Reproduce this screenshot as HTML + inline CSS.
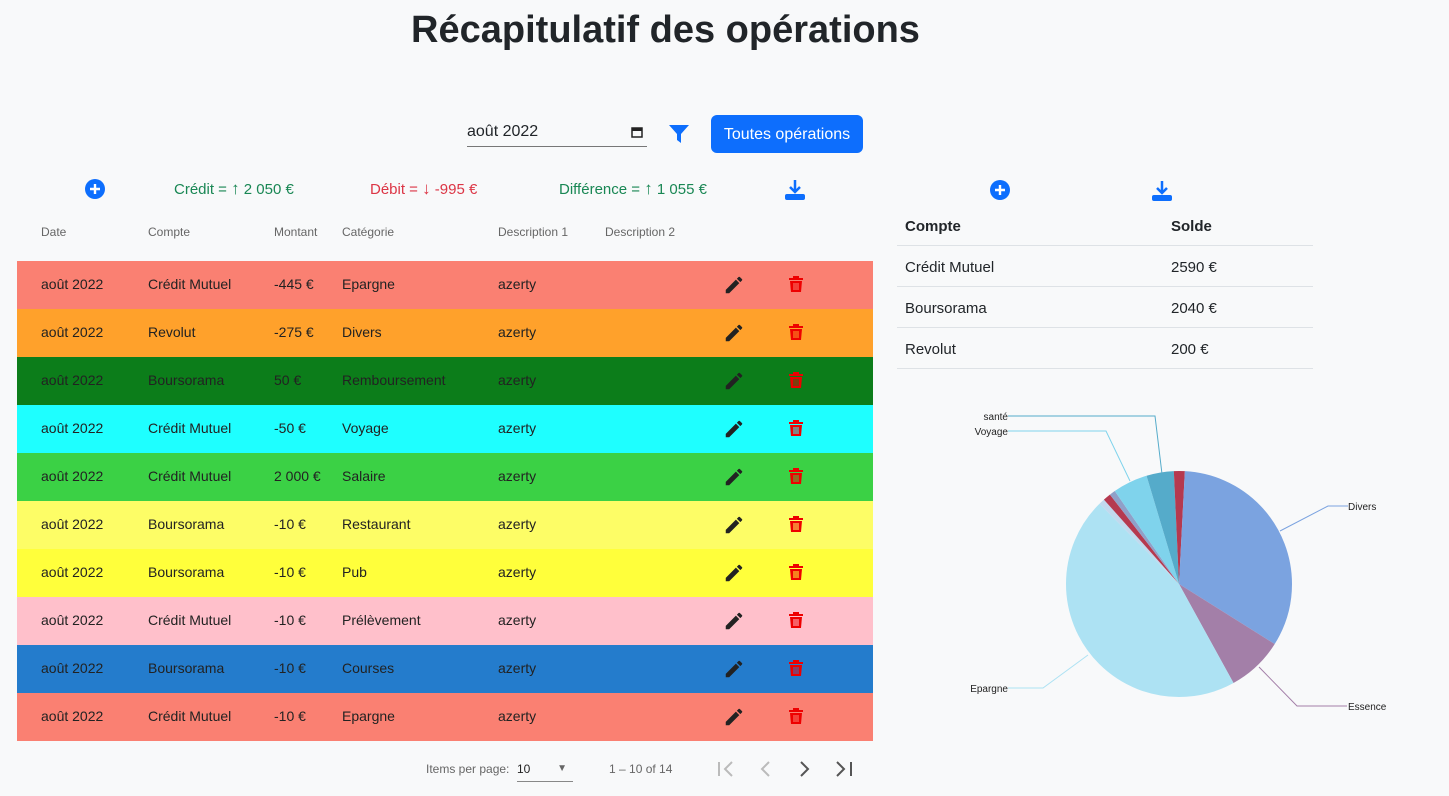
<!DOCTYPE html>
<html><head><meta charset="utf-8">
<style>
body{margin:0;width:1449px;height:796px;background:#f8f9fa;font-family:"Liberation Sans",sans-serif;position:relative;overflow:hidden;color:#212529}
.a{position:absolute;white-space:nowrap}
h1{position:absolute;left:0;width:1331px;top:9px;margin:0;text-align:center;font-size:38px;font-weight:bold;color:#212529}
.row{position:absolute;left:17px;width:856px;height:48px;font-size:14px;color:#222}
.row span{position:absolute;top:15px}
.th{font-size:12px;color:#666;top:225px}
.rt{position:absolute;left:897px;width:416px;border-bottom:1px solid #dee2e6;height:40px;font-size:15px}
.rt span{position:absolute;top:13px}
</style></head><body>
<h1>Récapitulatif des opérations</h1>

<div class="a" style="left:467px;top:123px;width:180px;height:23px;border-bottom:1px solid #777;font-size:16px">août 2022
<svg style="position:absolute;right:4px;top:3px" width="12" height="12" viewBox="0 0 12 12"><rect x="1" y="2" width="10" height="9" fill="none" stroke="#222" stroke-width="1.5"/><rect x="1" y="2" width="10" height="3" fill="#222"/></svg></div>
<svg class="a" style="left:668px;top:124px" width="22" height="20" viewBox="0 0 22 20"><path d="M1 1H21L13 10V19L9 16V10Z" fill="#0d6efd"/></svg>
<div class="a" style="left:711px;top:115px;width:152px;height:38px;background:#0d6efd;border-radius:6px;color:#fff;font-size:16px;line-height:40px;text-align:center">Toutes opérations</div>

<svg class="a" style="left:85px;top:179px" width="20" height="20"><circle cx="10" cy="10" r="10" fill="#0d6efd"/><path d="M10 5V15M5 10H15" stroke="#fff" stroke-width="2.4"/></svg>
<div class="a" style="left:174px;top:179px;font-size:15px;color:#198754">Crédit = <b style="font-size:17px">↑</b> 2 050 €</div>
<div class="a" style="left:370px;top:179px;font-size:15px;color:#dc3545">Débit = <b style="font-size:17px">↓</b> -995 €</div>
<div class="a" style="left:559px;top:179px;font-size:15px;color:#198754">Différence = <b style="font-size:17px">↑</b> 1 055 €</div>
<svg class="a" style="left:784px;top:179px" width="22" height="22" viewBox="0 0 22 22"><path d="M11 1V13M6 8L11 13L16 8" stroke="#0d6efd" stroke-width="2.5" fill="none"/><rect x="1" y="15" width="20" height="6" rx="2" fill="#0d6efd"/></svg>
<svg class="a" style="left:990px;top:180px" width="20" height="20"><circle cx="10" cy="10" r="10" fill="#0d6efd"/><path d="M10 5V15M5 10H15" stroke="#fff" stroke-width="2.4"/></svg>
<svg class="a" style="left:1151px;top:180px" width="22" height="22" viewBox="0 0 22 22"><path d="M11 1V13M6 8L11 13L16 8" stroke="#0d6efd" stroke-width="2.5" fill="none"/><rect x="1" y="15" width="20" height="6" rx="2" fill="#0d6efd"/></svg>

<div class="a th" style="left:41px">Date</div>
<div class="a th" style="left:148px">Compte</div>
<div class="a th" style="left:274px">Montant</div>
<div class="a th" style="left:342px">Catégorie</div>
<div class="a th" style="left:498px">Description 1</div>
<div class="a th" style="left:605px">Description 2</div>

<div id="rows"></div>
<script>
var d=[["#fa8072","Crédit Mutuel","-445 €","Epargne"],["#ffa12b","Revolut","-275 €","Divers"],["#0c7d1a","Boursorama","50 €","Remboursement"],["#1effff","Crédit Mutuel","-50 €","Voyage"],["#3bd145","Crédit Mutuel","2 000 €","Salaire"],["#fdfd66","Boursorama","-10 €","Restaurant"],["#ffff3b","Boursorama","-10 €","Pub"],["#ffc0cb","Crédit Mutuel","-10 €","Prélèvement"],["#247ccc","Boursorama","-10 €","Courses"],["#fa8072","Crédit Mutuel","-10 €","Epargne"]];
var h="";d.forEach(function(r,i){h+='<div class="row" style="top:'+(261+i*48)+'px;background:'+r[0]+'"><span style="left:24px">août 2022</span><span style="left:131px">'+r[1]+'</span><span style="left:257px">'+r[2]+'</span><span style="left:325px">'+r[3]+'</span><span style="left:481px">azerty</span>'+
'<svg style="position:absolute;left:706px;top:13px" width="22" height="22" viewBox="0 0 24 24"><path d="M3 17.25V21h3.75L17.81 9.94l-3.75-3.75L3 17.25zM20.71 7.04a1 1 0 000-1.41l-2.34-2.34a1 1 0 00-1.41 0l-1.83 1.83 3.75 3.75 1.83-1.83z" fill="#222"/></svg>'+
'<svg style="position:absolute;left:771px;top:14px" width="16" height="18" viewBox="0 0 16 18"><path d="M5 1H11V3H15V5H1V3H5Z" fill="#e00"/><path d="M2 6H14L13 17H3Z" fill="#e00"/><path d="M6 8V15M8 8V15M10 8V15" stroke="'+r[0]+'" stroke-width="1"/></svg></div>'});
document.getElementById("rows").innerHTML=h;
</script>

<div class="rt" style="top:205px;font-weight:bold"><span style="left:8px">Compte</span><span style="left:274px">Solde</span></div>
<div class="rt" style="top:246px"><span style="left:8px">Crédit Mutuel</span><span style="left:274px">2590 €</span></div>
<div class="rt" style="top:287px"><span style="left:8px">Boursorama</span><span style="left:274px">2040 €</span></div>
<div class="rt" style="top:328px"><span style="left:8px">Revolut</span><span style="left:274px">200 €</span></div>

<svg class="a" style="left:0;top:0" width="1449" height="796">
<g transform="translate(1179,584) rotate(-90)" fill="none" stroke-width="113">
<circle r="56.5" stroke="#b5394f" stroke-dasharray="3 358" stroke-dashoffset="0"/>
<circle r="56.5" stroke="#7ba3e0" stroke-dasharray="117.3 355" stroke-dashoffset="-3"/>
<circle r="56.5" stroke="#a37fa8" stroke-dasharray="28.6 355" stroke-dashoffset="-120.3"/>
<circle r="56.5" stroke="#ade2f3" stroke-dasharray="161.7 355" stroke-dashoffset="-148.9"/>
<circle r="56.5" stroke="#c2d9ee" stroke-dasharray="3 355" stroke-dashoffset="-310.6"/>
<circle r="56.5" stroke="#b5394f" stroke-dasharray="3.9 355" stroke-dashoffset="-313.6"/>
<circle r="56.5" stroke="#8fa0c8" stroke-dasharray="3 355" stroke-dashoffset="-317.5"/>
<circle r="56.5" stroke="#7fd3ec" stroke-dasharray="17.7 355" stroke-dashoffset="-320.5"/>
<circle r="56.5" stroke="#55abca" stroke-dasharray="13.8 355" stroke-dashoffset="-338.2"/>
<circle r="56.5" stroke="#b5394f" stroke-dasharray="3.2 355" stroke-dashoffset="-352"/>
</g>
<g fill="none" stroke-width="1">
<polyline points="1162,474 1155,416 1008,416" stroke="#55abca"/>
<polyline points="1130,481 1106,431 1008,431" stroke="#7fd3ec"/>
<polyline points="1280,531 1328,506 1348,506" stroke="#7ba3e0"/>
<polyline points="1259,667 1297,706 1347,706" stroke="#a37fa8"/>
<polyline points="1088,655 1043,688 1008,688" stroke="#ade2f3"/>
</g>
<g font-size="10" fill="#222" font-family="Liberation Sans,sans-serif">
<text x="1008" y="420" text-anchor="end">santé</text>
<text x="1008" y="435" text-anchor="end">Voyage</text>
<text x="1348" y="510">Divers</text>
<text x="1348" y="710">Essence</text>
<text x="1008" y="692" text-anchor="end">Epargne</text>
</g>
</svg>

<div class="a" style="left:426px;top:762px;font-size:12px;color:#666">Items per page:</div>
<div class="a" style="left:517px;top:762px;width:56px;height:19px;border-bottom:1px solid #888;font-size:12px;color:#222">10<span style="position:absolute;right:6px;top:1px;font-size:10px;color:#666">▼</span></div>
<div class="a" style="left:609px;top:762px;font-size:12px;color:#666">1 – 10 of 14</div>
<svg class="a" style="left:713px;top:758px" width="145" height="22" viewBox="0 0 145 22">
<g fill="none" stroke-width="2">
<path d="M6 4V18M19 4L12 11L19 18" stroke="#bbb"/>
<path d="M56 4L49 11L56 18" stroke="#bbb"/>
<path d="M88 4L95 11L88 18" stroke="#555"/>
<path d="M124 4L131 11L124 18M138 4V18" stroke="#555"/>
</g></svg>
</body></html>
